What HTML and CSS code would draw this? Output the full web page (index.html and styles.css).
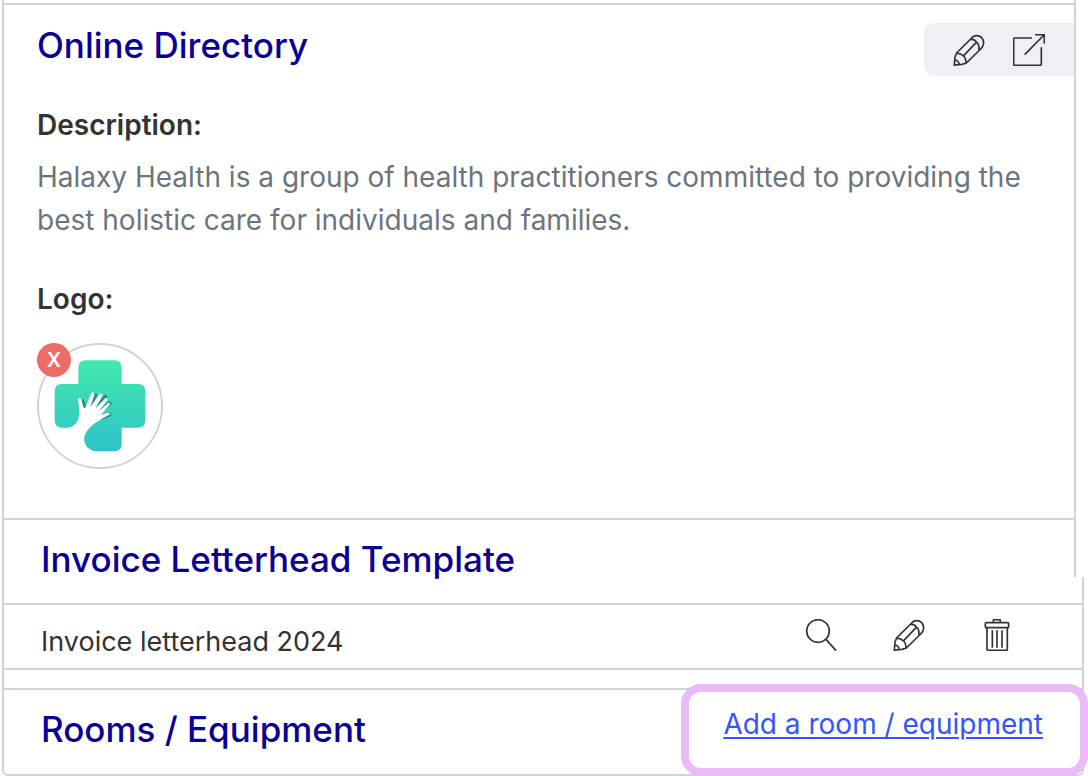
FILE: index.html
```html
<!DOCTYPE html>
<html lang="en">
<head>
<meta charset="utf-8">
<title>Clinic settings</title>
<link rel="stylesheet" href="styles.css">
</head>
<body>
<svg class="symbols" aria-hidden="true">
  <symbol id="pencil" viewBox="157 103 96 96">
    <path d="M161 196L163 172L168 160L210 118Q217 109 226 108Q236 107 243 114Q249 121 249 130Q248 141 240 148L197 190L184 194ZM168 161Q181 160 187 168Q196 174 196 190M189 168L227 128M210 119Q222 118 227 127Q236 133 235 151M163 181Q174 183 176 195"/>
  </symbol>
</svg>
<main class="page">
  <div class="upper">
    <section class="directory">
      <header class="directory-head">
        <h2 class="title">Online Directory</h2>
        <div class="toolbar">
          <button class="icon-button" type="button" aria-label="Edit directory"><svg class="icon"><use href="#pencil"/></svg></button>
          <button class="icon-button" type="button" aria-label="Open directory"><svg class="icon" viewBox="339 101 96 96"><path d="M396 113H344Q341 113 341 116V192Q341 195 344 195H421Q424 195 424 192V141M374 163L432 104M405 103H433V130"/></svg></button>
        </div>
      </header>
      <h3 class="label">Description:</h3>
      <p class="description">Halaxy Health is a group of health practitioners committed to providing the best holistic care for individuals and families.</p>
      <h3 class="label">Logo:</h3>
      <div class="logo">
        <svg class="logo-image" viewBox="51 39 378 378" role="img" aria-label="Halaxy Health logo">
          <defs>
            <linearGradient id="mint" x1="0" y1="0" x2="0" y2="1"><stop offset="0" stop-color="#43e8af"/><stop offset="1" stop-color="#2fc2c8"/></linearGradient>
          </defs>
          <path fill="url(#mint)" d="M197 91H283Q305 91 305 113V162H354Q376 162 376 184V271Q376 293 354 293H305V342Q305 364 283 364H222Q194 354 192 328Q190 300 222 276L230 240L190 230L178 240Q180 270 168 281Q156 293 140 293H126Q104 293 104 271V184Q104 162 126 162H175V113Q175 91 197 91Z"/>
          <g fill="none" stroke="#24907f" stroke-width="12" stroke-linecap="round"><path d="M194 236L187 214M209 232L226 196M228 240L256 200M236 250L269 220M240 264L268 254"/></g>
          <path fill="#fff" d="M174 207Q179 201 184 208L190 232Q194 237 197 231L214 190Q220 183 224 192L211 231L237 194Q244 188 248 195L226 236L254 206Q261 201 263 209L236 244L262 221Q269 215 270 223L242 256L261 249Q269 246 270 253Q242 268 222 281Q190 306 192 333Q194 354 212 366H150L140 294Q156 293 167 281Q179 267 178 237Z"/>
        </svg>
        <button class="remove" type="button" aria-label="Remove logo">X</button>
      </div>
    </section>
    <header class="letterhead-head">
      <h2 class="title">Invoice Letterhead Template</h2>
    </header>
  </div>
  <div class="lower">
    <div class="letterhead-row">
      <span class="name">Invoice letterhead 2024</span>
      <div class="actions">
        <button class="icon-button" type="button" aria-label="Preview letterhead"><svg class="icon" viewBox="75 177 96 96"><circle cx="114" cy="213" r="34"/><path d="M138 238L168 272"/></svg></button>
        <button class="icon-button" type="button" aria-label="Edit letterhead"><svg class="icon"><use href="#pencil"/></svg></button>
        <button class="icon-button" type="button" aria-label="Delete letterhead"><svg class="icon" viewBox="604 177 96 96"><path d="M641 188V182Q641 179 644 179H659Q662 179 662 182V188M620 188H684Q687 188 687 191V200Q687 203 684 203H620Q617 203 617 200V191Q617 188 620 188ZM622 203V268Q622 271 625 271H680Q683 271 683 268V203M638 211V263M652 211V263M667 211V263"/></svg></button>
      </div>
    </div>
    <section class="rooms">
      <h2 class="title">Rooms / Equipment</h2>
      <div class="callout"><a class="add-link" href="#">Add a room / equipment</a></div>
    </section>
  </div>
</main>
</body>
</html>
```
FILE: styles.css
```css
* { box-sizing: border-box; }
body {
  margin: 0;
  background: #fff;
  color: #333;
  font: 28px/43px Inter, "Liberation Sans", sans-serif;
}
h2, h3, p { margin: 0; }
button { padding: 0; border: 0; background: none; color: inherit; font: inherit; cursor: pointer; }
.symbols { position: absolute; width: 0; height: 0; }
.page { padding: 0 4px 0 2px; }
.upper {
  margin-right: 8px;
  padding-top: 3px;
  border: solid #ced4da;
  border-width: 0 2px;
}
.directory {
  padding: 18px 0 49px 33px;
  border-top: 2px solid #ced4da;
}
.directory-head {
  display: flex;
  justify-content: space-between;
  align-items: flex-start;
  margin-bottom: 28px;
}
.title { color: #0b0094; font-size: 35px; font-weight: 500; line-height: 44px; }
.toolbar {
  display: flex;
  gap: 28px;
  padding: 11px 29px 10px;
  border-radius: 10px 0 0 10px;
  background: #f0eff5;
}
.icon-button { display: block; width: 32px; height: 32px; }
.icon { display: block; width: 32px; height: 32px; fill: none; stroke: #333; stroke-width: 5; }
.label { font-size: 28px; font-weight: 600; line-height: 43px; }
.description { margin: 9px 16px 36px 0; color: #6c757d; }
.logo { position: relative; width: 126px; height: 126px; margin-top: 22px; border: 2px solid #ced4da; border-radius: 50%; }
.logo-image { display: block; width: 126px; height: 126px; margin: -2px; }
.remove {
  position: absolute;
  top: -2px;
  left: -2px;
  width: 34px;
  height: 34px;
  border-radius: 50%;
  background: #ee6c66;
  color: #fff;
  font-size: 20px;
  font-weight: 600;
  line-height: 34px;
}
.letterhead-head { padding: 17px 37px 0; border-top: 2px solid #ced4da; height: 59px; }
.lower {
  padding-top: 26px;
  border: solid #ced4da;
  border-width: 0 2px 2px;
  border-radius: 0 0 6px 6px;
}
.letterhead-row {
  display: flex;
  justify-content: space-between;
  align-items: flex-start;
  padding: 14px 69px 6px 37px;
  border: solid #ced4da;
  border-width: 2px 0;
}
.name { padding-top: 2px; font-size: 27px; line-height: 41px; }
.actions { display: flex; gap: 56px; }
.rooms {
  position: relative;
  margin-top: 18px;
  padding: 17px 37px 23px;
  border-top: 2px solid #ced4da;
}
.callout {
  position: absolute;
  top: -6px;
  right: -6px;
  padding: 11px 37px 22px 34px;
  border: 8px solid #ebbaf9;
  border-radius: 20px;
  background: #fff;
}
.add-link {
  color: #3355ff;
  text-decoration-thickness: 2px;
  text-underline-offset: 3px;
}
```
